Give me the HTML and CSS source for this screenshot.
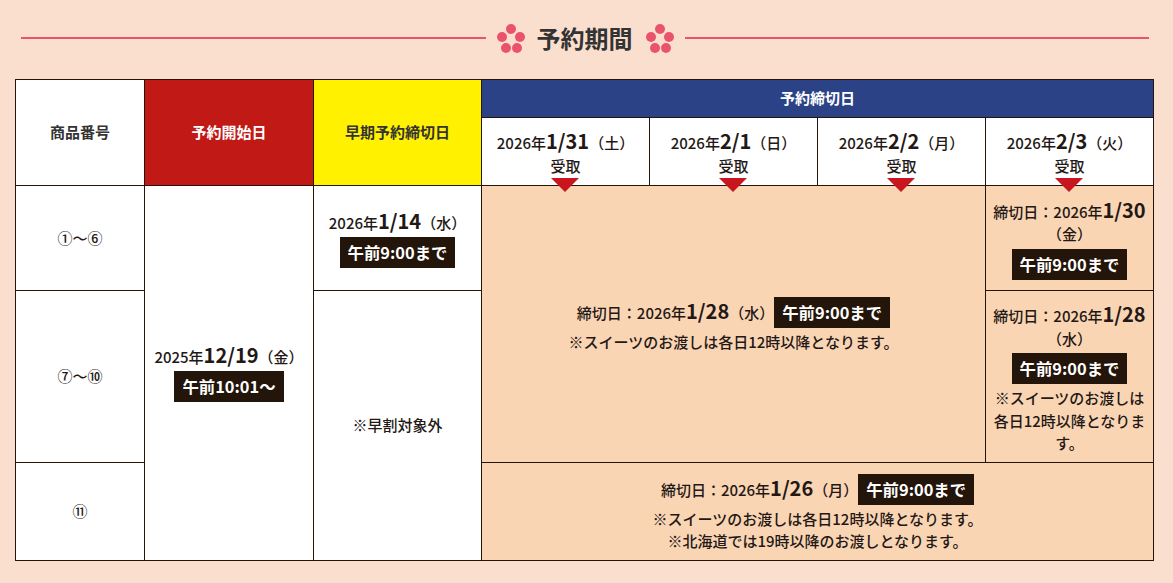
FILE: index.html
```html
<!DOCTYPE html>
<html lang="ja">
<head>
<meta charset="utf-8">
<title>予約期間</title>
<link rel="stylesheet" href="styles.css">
</head>
<body>
<main class="page">
  <h2 class="heading">
    <span class="rule"></span>
    <svg class="flower" viewBox="0 0 28 29"><circle cx="14" cy="5" r="5"/><circle cx="5" cy="13" r="5"/><circle cx="23" cy="13" r="5"/><circle cx="9" cy="24" r="5"/><circle cx="20" cy="24" r="5"/></svg>
    <span class="heading-text">予約期間</span>
    <svg class="flower" viewBox="0 0 28 29"><circle cx="14" cy="5" r="5"/><circle cx="5" cy="13" r="5"/><circle cx="23" cy="13" r="5"/><circle cx="9" cy="24" r="5"/><circle cx="20" cy="24" r="5"/></svg>
    <span class="rule"></span>
  </h2>
  <table class="schedule">
    <colgroup>
      <col class="c-num"><col class="c-start"><col class="c-wide"><col class="c-wide"><col class="c-wide"><col class="c-wide"><col class="c-wide">
    </colgroup>
    <thead>
      <tr class="r-top">
        <th rowspan="2" class="plain-head">商品番号</th>
        <th rowspan="2" class="red">予約開始日</th>
        <th rowspan="2" class="yellow">早期予約締切日</th>
        <th colspan="4" class="navy">予約締切日</th>
      </tr>
      <tr class="r-days">
        <td class="day">2026年<b>1/31</b>（土）<br>受取</td>
        <td class="day">2026年<b>2/1</b>（日）<br>受取</td>
        <td class="day">2026年<b>2/2</b>（月）<br>受取</td>
        <td class="day">2026年<b>2/3</b>（火）<br>受取</td>
      </tr>
    </thead>
    <tbody>
      <tr class="r-1">
        <td>①～⑥</td>
        <td rowspan="3" class="start">2025年<b>12/19</b>（金）<br><span class="tag">午前10:01～</span></td>
        <td class="stack">2026年<b>1/14</b>（水）<br><span class="tag">午前9:00まで</span></td>
        <td colspan="3" rowspan="2" class="peach">締切日：2026年<b>1/28</b>（水）<span class="tag">午前9:00まで</span><br><span class="note">※スイーツのお渡しは各日12時以降となります。</span></td>
        <td class="peach stack">締切日：2026年<b>1/30</b>（金）<br><span class="tag">午前9:00まで</span></td>
      </tr>
      <tr class="r-2">
        <td>⑦～⑩</td>
        <td rowspan="2">※早割対象外</td>
        <td class="peach stack">締切日：2026年<b>1/28</b>（水）<br><span class="tag">午前9:00まで</span><br><span class="note">※スイーツのお渡しは各日12時以降となります。</span></td>
      </tr>
      <tr class="r-3">
        <td>⑪</td>
        <td colspan="4" class="peach">締切日：2026年<b>1/26</b>（月）<span class="tag">午前9:00まで</span><br><span class="note">※スイーツのお渡しは各日12時以降となります。<br>※北海道では19時以降のお渡しとなります。</span></td>
      </tr>
    </tbody>
  </table>
</main>
</body>
</html>
```

FILE: styles.css
```css
* {
  box-sizing: border-box;
}

html,
body {
  margin: 0;
  height: 100%;
  overflow: hidden;
}

body {
  background: #fbdfce;
  color: #231815;
  font-family: "Noto Sans CJK JP", "Noto Sans", sans-serif;
}

.page {
  padding: 19px 19px 0 15px;
}

.heading {
  display: flex;
  align-items: center;
  gap: 11px;
  height: 38px;
  margin: 0 0 22px;
  padding: 0 5px 0 6px;
  font-size: 24px;
  line-height: 38px;
  font-weight: 700;
  color: #333;
}

.heading-text {
  margin: 0 2px 0 1px;
}

.rule {
  flex: 1;
  height: 2px;
  background: #e9546b;
}

.flower {
  width: 28px;
  height: 29px;
  fill: #e9546b;
}

.schedule {
  width: 1139px;
  table-layout: fixed;
  border-collapse: collapse;
  font-size: 15px;
  line-height: 1.5;
  font-weight: 500;
  text-align: center;
  background: #fff;
}

.c-num {
  width: 129px;
}

.c-start {
  width: 169px;
}

.c-wide {
  width: 168px;
}

.schedule th,
.schedule td {
  border: 1px solid #231509;
  padding: 0 6px;
  text-align: center;
  vertical-align: middle;
  font-weight: 500;
}

.schedule th {
  font-weight: 700;
}

.r-top {
  height: 38px;
}

.r-days {
  height: 68px;
}

.r-1 {
  height: 105px;
}

.r-2 {
  height: 172px;
}

.r-3 {
  height: 98px;
}

.schedule .plain-head {
  color: #333;
}

.schedule .red {
  background: #c01916;
  color: #fff;
}

.schedule .yellow {
  background: #fff100;
  color: #333;
}

.schedule .navy {
  background: #2b4386;
  color: #fff;
}

.schedule .day {
  position: relative;
  padding-top: 4px;
  line-height: 23px;
}

.day::after {
  content: "";
  position: absolute;
  left: 50%;
  bottom: -7px;
  margin-left: -15px;
  border-style: solid;
  border-width: 14px 14.5px 0;
  border-color: #c9151e transparent transparent;
}

.schedule .peach {
  background: #fad5b4;
}

.schedule .stack {
  padding-top: 6px;
}

.schedule .start {
  padding-top: 4px;
}

.schedule b {
  font-size: 20px;
  line-height: 1;
  font-weight: 700;
}

.tag {
  display: inline-block;
  height: 31px;
  margin: 3px 0;
  padding: 0 8px;
  background: #231509;
  color: #fff;
  font-size: 16.4px;
  line-height: 31px;
  font-weight: 700;
}

.note {
  font-weight: 500;
}
```
